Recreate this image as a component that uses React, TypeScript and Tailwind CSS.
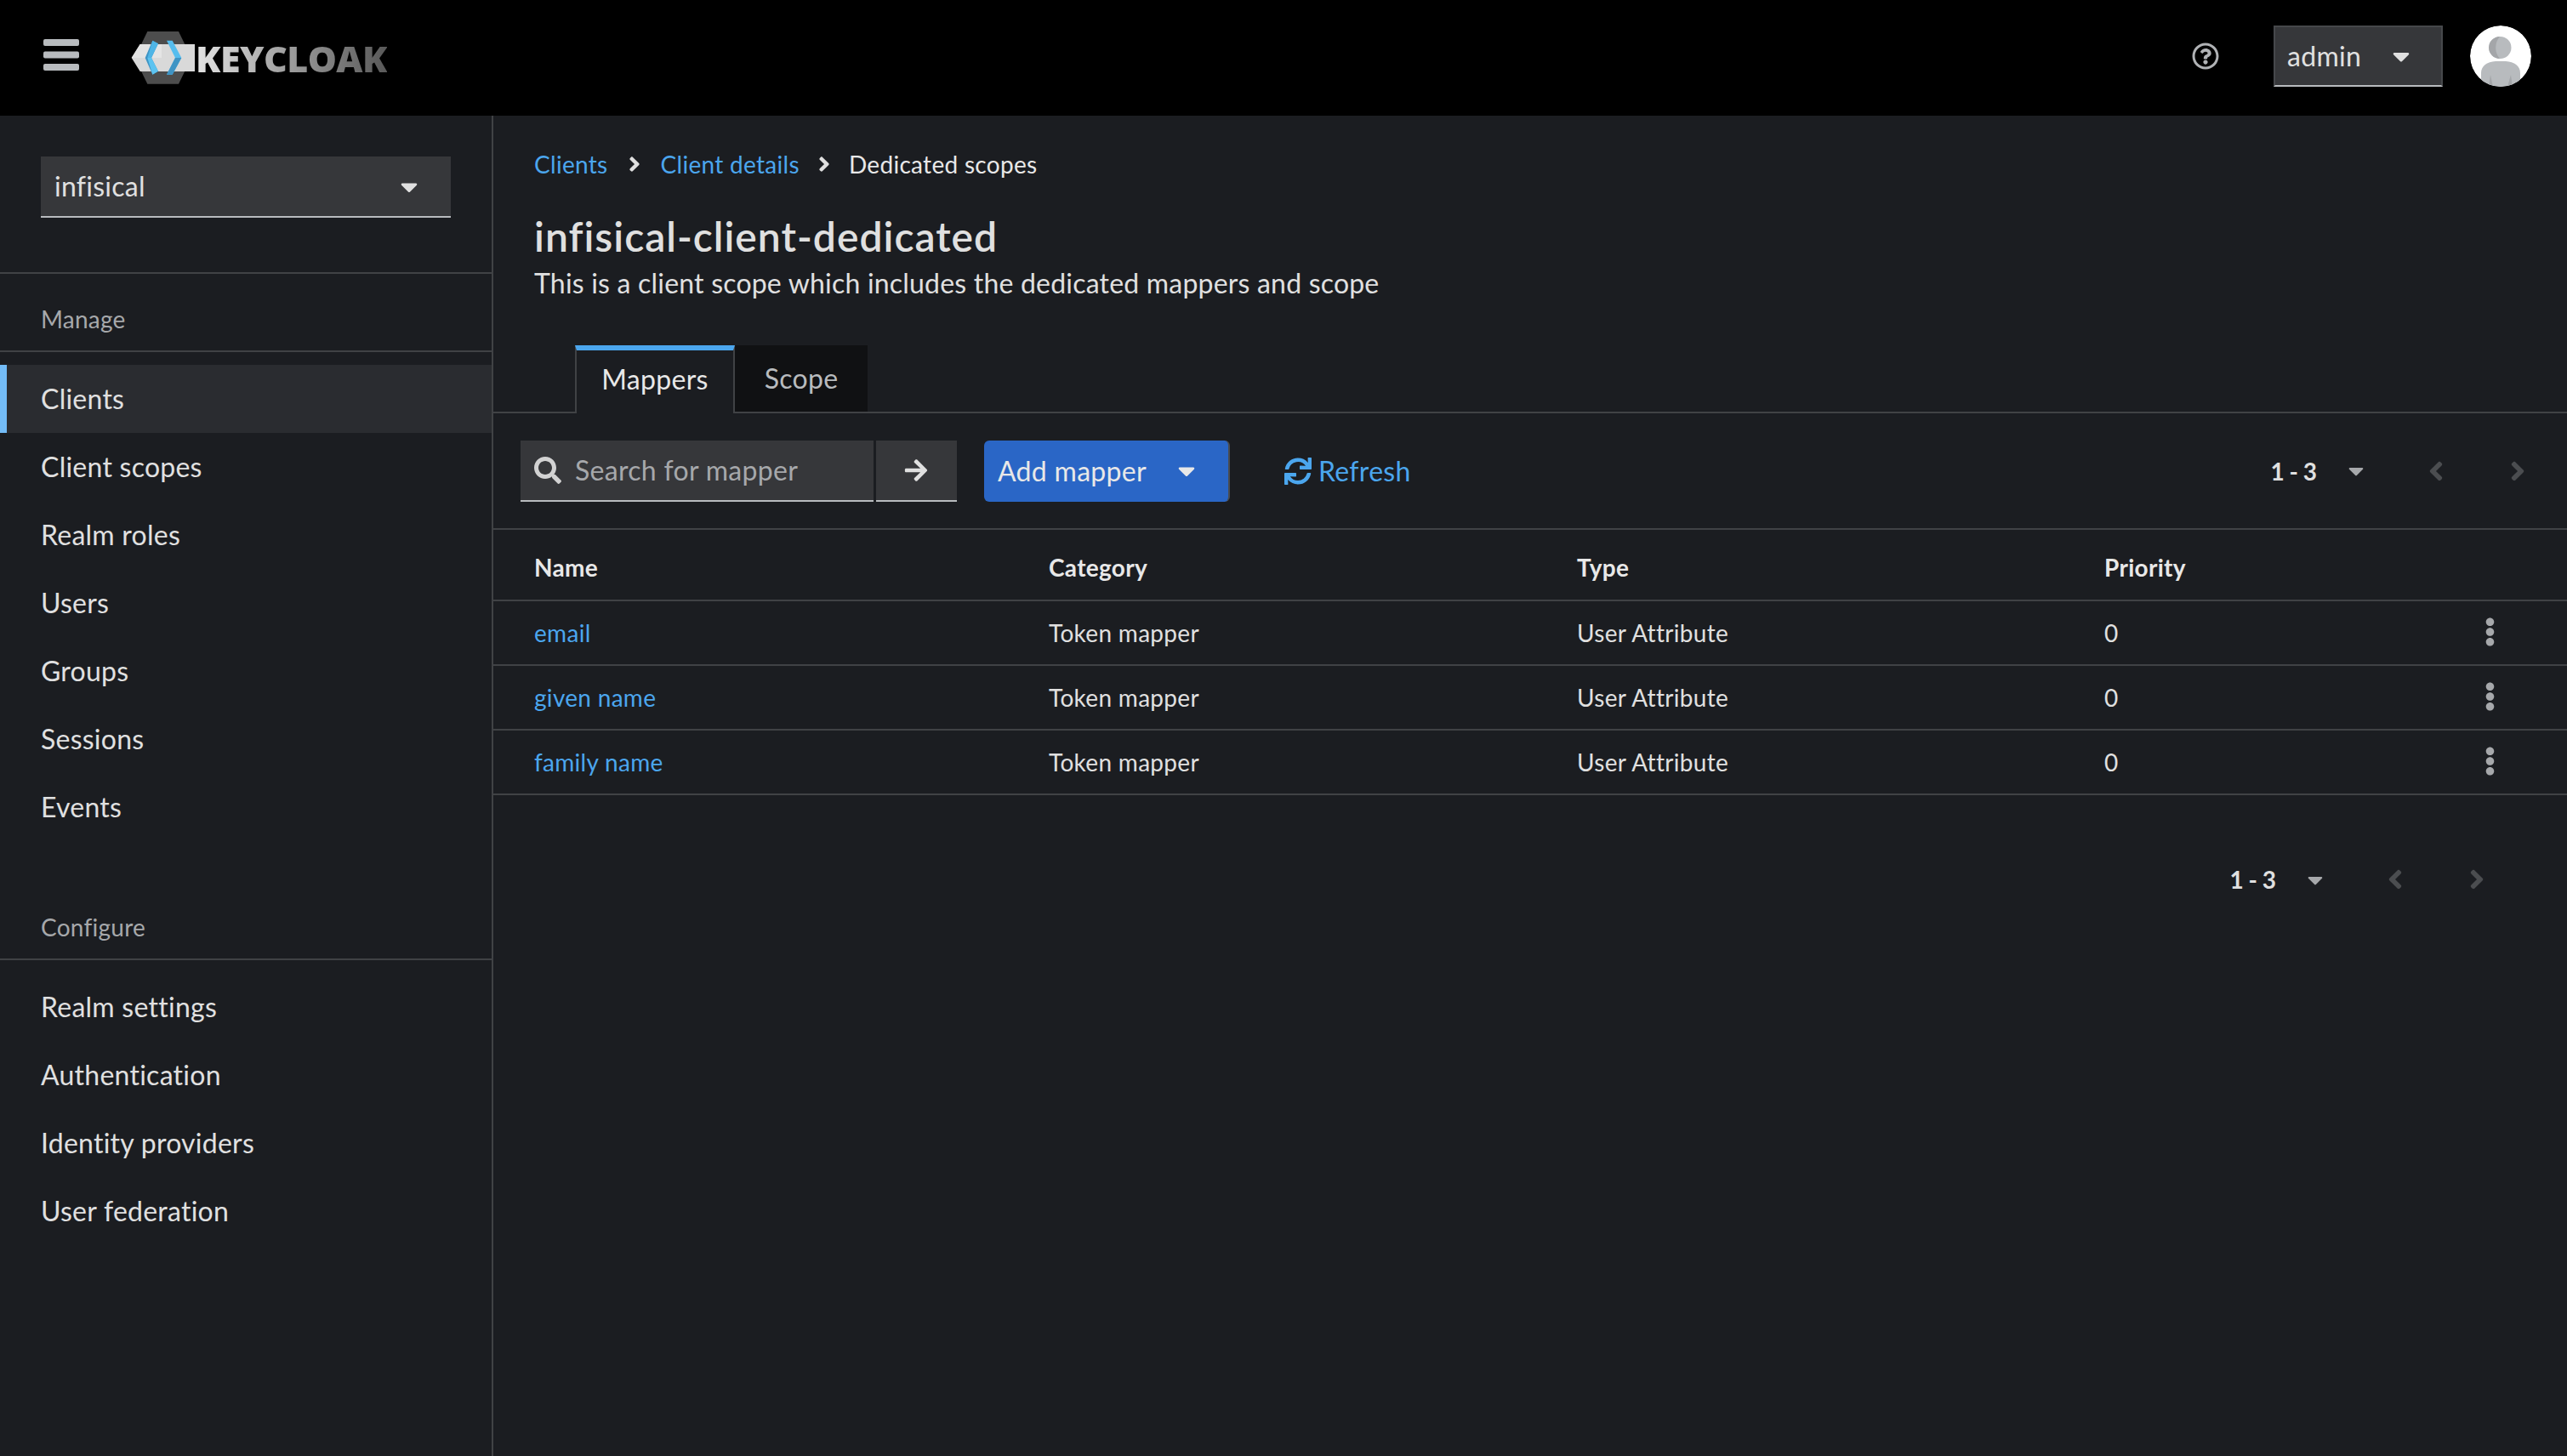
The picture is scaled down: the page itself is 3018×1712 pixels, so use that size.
import { FaAngleLeft, FaAngleRight, FaArrowRight, FaCaretDown, FaEllipsisV, FaRegQuestionCircle, FaSearch, FaSync } from 'react-icons/fa';

const manageItems = ['Clients', 'Client scopes', 'Realm roles', 'Users', 'Groups', 'Sessions', 'Events'];
const configureItems = ['Realm settings', 'Authentication', 'Identity providers', 'User federation'];
const mappers = ['email', 'given name', 'family name'];

function KeycloakMark() {
  return (
    <svg viewBox="0 0 270 216" className="w-[90px] h-[72px] shrink-0">
      <polygon points="70,15 180,15 225,108 180,200 70,200 25,108" fill="#4d4d4d" />
      <polygon points="14,108 44,60 237,60 237,156 44,156" fill="#d9d9d9" />
      <polygon points="14,108 44,60 120,60 120,108" fill="#e4e4e4" />
      {/* left bracket */}
      <polygon points="88,47 108,58 84,108 108,155 88,167 62,108" fill="#3f94c4" />
      <polygon points="88,47 108,58 84,108 70,108" fill="#4fb5e6" />
      <polygon points="70,108 84,108 108,155 88,167" fill="#5cc3f0" />
      {/* right bracket */}
      <polygon points="138,47 158,47 190,108 158,167 138,167 168,108" fill="#56bdee" />
      <polygon points="168,108 190,108 158,167 138,167" fill="#3f94c4" />
    </svg>
  );
}

function Hamburger() {
  return (
    <svg viewBox="0 0 42 37" className="w-[42px] h-[37px] ml-[51px] mb-[7px] shrink-0" fill="#b8bbbe">
      <rect x="0" y="0" width="42" height="8" rx="2" />
      <rect x="0" y="14.5" width="42" height="8" rx="2" />
      <rect x="0" y="29" width="42" height="8" rx="2" />
    </svg>
  );
}

function Avatar() {
  return (
    <svg viewBox="0 0 72 72" className="w-[72px] h-[72px] shrink-0">
      <defs>
        <clipPath id="avatar-clip">
          <circle cx="36" cy="36" r="36" />
        </clipPath>
      </defs>
      <g clipPath="url(#avatar-clip)">
        <circle cx="36" cy="36" r="36" fill="#ffffff" />
        <circle cx="35.5" cy="26" r="13" fill="#b8bbbe" />
        <path d="M35 13 a13 13 0 0 0 0 26 a20 20 0 0 1 0 -26z" fill="#a4a6a9" />
        <path d="M13 72 V56 C13 47 20 43 30 42 H42 C52 43 59 47 59 56 V72 Z" fill="#b8bbbe" />
        <path d="M22 72 L24 58 L27 72 Z M44 72 L48 58 L50 72 Z" fill="#a4a6a9" />
      </g>
    </svg>
  );
}

function Header() {
  return (
    <header className="h-[136px] bg-black flex items-center shrink-0">
      <Hamburger />
      <div className="flex items-center ml-[57px]">
        <KeycloakMark />
        <span className="-ml-[10px] font-['Open_Sans',sans-serif] font-extrabold text-[43px] leading-none tracking-[-0.6px] bg-gradient-to-r from-[#e4e4e4] to-[#595959] bg-clip-text text-transparent">KEYCLOAK</span>
      </div>
      <div className="ml-auto mb-[4px] flex items-center">
        <FaRegQuestionCircle className="w-[32px] h-[32px] text-[#b0b2b5]" />
        <div className="ml-[64px] w-[199px] h-[72px] bg-[#36373a] border-2 border-[#46484b] border-b-[#b8bbbe] flex items-center pl-[14px] text-[32px] text-[#e0e0e0]">
          admin
          <FaCaretDown className="w-[20px] h-[32px] ml-[37px] text-[#e0e0e0]" />
        </div>
        <div className="ml-[32px] mr-[42px]">
          <Avatar />
        </div>
      </div>
    </header>
  );
}

function NavSection({ label, items, active }: { label: string; items: string[]; active?: string }) {
  return (
    <div>
      <div className="h-[92px] pt-[16px] pl-[48px] flex items-center border-b-2 border-[#404245] text-[28px] text-[#a6a8ab]">{label}</div>
      <ul className="pt-[15px]">
        {items.map((item) => (
          <li
            key={item}
            className={
              item === active
                ? 'h-[80px] flex items-center pl-[40px] border-l-8 border-[#73bcf7] bg-[#2a2c30] text-[32px] text-[#e0e0e0]'
                : 'h-[80px] flex items-center pl-[48px] text-[32px] text-[#e0e0e0]'
            }
          >
            {item}
          </li>
        ))}
      </ul>
    </div>
  );
}

function Sidebar() {
  return (
    <aside className="w-[580px] shrink-0 border-r-2 border-[#404245] tracking-[0.25px]">
      <div className="pt-[48px] pb-[64px] px-[48px] border-b-2 border-[#404245]">
        <div className="h-[72px] bg-[#36373a] border-b-2 border-[#b8bbbe] flex items-center justify-between pl-[16px] pr-[39px] text-[32px] text-[#e0e0e0]">
          infisical
          <FaCaretDown className="w-[20px] h-[33px]" />
        </div>
      </div>
      <NavSection label="Manage" items={manageItems} active="Clients" />
      <div className="h-[48px]" />
      <NavSection label="Configure" items={configureItems} />
    </aside>
  );
}

function Pagination({ className }: { className: string }) {
  return (
    <div className={`flex items-center text-[#e0e0e0] ${className}`}>
      <span className="text-[28px] font-bold tracking-[1px] [word-spacing:-3px] whitespace-pre">1 - 3</span>
      <FaCaretDown className="w-[18px] h-[29px] ml-[36px] text-[#a6a8ab]" />
      <FaAngleLeft className="w-[18px] h-[36px] ml-[76px] text-[#4b4d50]" />
      <FaAngleRight className="w-[18px] h-[36px] ml-[78px] text-[#4b4d50]" />
    </div>
  );
}

function Toolbar() {
  return (
    <div className="h-[137px] flex items-center pl-[32px] border-b-2 border-[#404245]">
      <div className="w-[415px] h-[72px] bg-[#36373a] border-b-2 border-[#b8bbbe] flex items-center pl-[16px] text-[32px] text-[#a6a8ab]">
        <FaSearch className="w-[32px] h-[32px] text-[#d2d2d2]" />
        <span className="ml-[16px]">Search for mapper</span>
      </div>
      <div className="ml-[3px] w-[95px] h-[72px] bg-[#36373a] border-b-2 border-[#b8bbbe] flex items-center justify-center">
        <FaArrowRight className="w-[30px] h-[30px] -ml-[2px] text-[#e0e0e0]" />
      </div>
      <div className="ml-[32px] w-[289px] h-[72px] rounded-[6px] bg-[#2a66c6] border-r-2 border-[#4a4c50] flex items-center pl-[16px] text-[32px] text-[#e8e8e8]">
        Add mapper
        <FaCaretDown className="w-[20px] h-[33px] ml-[37px]" />
      </div>
      <div className="ml-[64px] flex items-center text-[32px] text-[#4ba6ee]">
        <FaSync className="w-[32px] h-[32px]" />
        <span className="ml-[8px]">Refresh</span>
      </div>
      <Pagination className="ml-auto mr-[49px]" />
    </div>
  );
}

function MappersTable() {
  const gridRow = 'grid grid-cols-[653px_621px_620px_1fr] items-center border-b-2 border-[#404245]';
  return (
    <div className="text-[28px]">
      <div className={`${gridRow} h-[84px] pt-[6px] font-bold text-[#e8e8e8]`}>
        <div className="pl-[48px]">Name</div>
        <div>Category</div>
        <div>Type</div>
        <div>Priority</div>
      </div>
      {mappers.map((name) => (
        <div key={name} className={`${gridRow} h-[76px] text-[#e0e0e0]`}>
          <div className="pl-[48px] text-[#4ba6ee]">{name}</div>
          <div>Token mapper</div>
          <div>User Attribute</div>
          <div className="flex items-center justify-between pr-[84px]">
            <span>0</span>
            <FaEllipsisV className="w-[13px] h-[34px] -mt-[2px] text-[#a6a8ab]" />
          </div>
        </div>
      ))}
    </div>
  );
}

export default function App() {
  return (
    <div className="w-[3018px] h-[1712px] overflow-hidden flex flex-col bg-[#1b1d21] font-['Lato',sans-serif] tracking-[0.3px]">
      <Header />
      <div className="flex flex-1">
        <Sidebar />
        <main className="flex-1 min-w-0">
          <nav className="mt-[40px] h-[34px] pl-[48px] flex items-center text-[28px] tracking-[0.3px] text-[#4ba6ee]">
            <span>Clients</span>
            <FaAngleRight className="w-[14px] h-[28px] mx-[24px] text-[#e0e0e0]" />
            <span>Client details</span>
            <FaAngleRight className="w-[14px] h-[28px] mx-[22px] text-[#e0e0e0]" />
            <span className="text-[#e8e8e8]">Dedicated scopes</span>
          </nav>
          <h1 className="mt-[40px] pl-[48px] text-[48px] leading-[56px] font-semibold tracking-[1px] text-[#e0e0e0]">infisical-client-dedicated</h1>
          <p className="mt-[5px] pl-[48px] text-[32px] leading-[44px] tracking-[0.2px] text-[#e0e0e0]">This is a client scope which includes the dedicated mappers and scope</p>
          <div className="mt-[51px] h-[80px] pl-[96px] flex border-b-2 border-[#404245] text-[32px]">
            <div className="w-[188px] h-[80px] pb-[6px] flex items-center justify-center bg-[#1b1d21] border-x-2 border-[#404245] border-t-[6px] border-t-[#4ba6ee] text-[#e8e8e8]">Mappers</div>
            <div className="w-[156px] h-[78px] flex items-center justify-center bg-[#101113] text-[#b8bbbe]">Scope</div>
          </div>
          <Toolbar />
          <MappersTable />
          <Pagination className="mt-[78px] justify-end mr-[97px]" />
        </main>
      </div>
    </div>
  );
}
